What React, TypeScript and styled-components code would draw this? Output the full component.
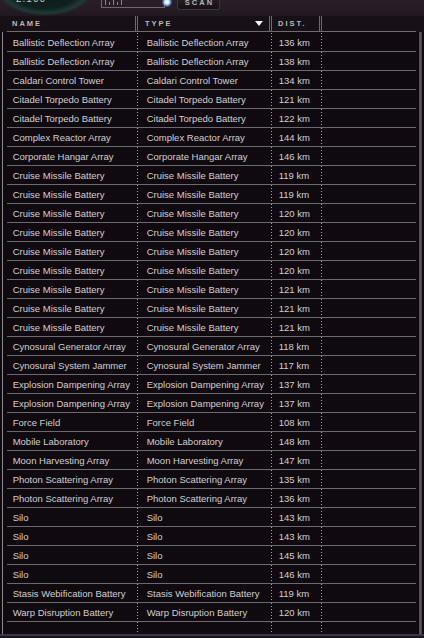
import React from "react";
import styled, { createGlobalStyle } from "styled-components";

const Global = createGlobalStyle`
  html, body { margin: 0; padding: 0; background: #0d080d; overflow: hidden; }
  * { box-sizing: border-box; }
`;

type Item = { name: string; type: string; dist: number };

const rows: Item[] = [
  ["Ballistic Deflection Array", 136],
  ["Ballistic Deflection Array", 138],
  ["Caldari Control Tower", 134],
  ["Citadel Torpedo Battery", 121],
  ["Citadel Torpedo Battery", 122],
  ["Complex Reactor Array", 144],
  ["Corporate Hangar Array", 146],
  ["Cruise Missile Battery", 119],
  ["Cruise Missile Battery", 119],
  ["Cruise Missile Battery", 120],
  ["Cruise Missile Battery", 120],
  ["Cruise Missile Battery", 120],
  ["Cruise Missile Battery", 120],
  ["Cruise Missile Battery", 121],
  ["Cruise Missile Battery", 121],
  ["Cruise Missile Battery", 121],
  ["Cynosural Generator Array", 118],
  ["Cynosural System Jammer", 117],
  ["Explosion Dampening Array", 137],
  ["Explosion Dampening Array", 137],
  ["Force Field", 108],
  ["Mobile Laboratory", 148],
  ["Moon Harvesting Array", 147],
  ["Photon Scattering Array", 135],
  ["Photon Scattering Array", 136],
  ["Silo", 143],
  ["Silo", 143],
  ["Silo", 145],
  ["Silo", 146],
  ["Stasis Webification Battery", 119],
  ["Warp Disruption Battery", 120],
].map(([n, d]) => ({ name: n as string, type: n as string, dist: d as number }));

const Window = styled.div`
  width: 424px;
  height: 638px;
  display: flex;
  flex-direction: column;
  background: #100a10;
  font-family: "Liberation Sans", Arial, sans-serif;
  overflow: hidden;
`;

const TopBar = styled.div`
  height: 16px;
  flex: none;
  display: flex;
  align-items: flex-start;
  overflow: hidden;
  background:
    radial-gradient(ellipse 47px 25px at 45px -9px, #0e1a1c 0%, #10201f 70%, #1f3a39 88%, rgba(31, 58, 57, 0) 100%),
    linear-gradient(to bottom, #2a1f29, #211821);
`;

const Readout = styled.div`
  width: 101px;
  padding-left: 16px;
  margin-top: -7px;
  line-height: 12px;
  font-size: 10px;
  letter-spacing: 1px;
  color: #c9c9c9;
`;

const SliderBox = styled.div`
  width: 64px;
  height: 14px;
  margin-top: -6px;
  border: 1px solid #6d6872;
  border-top: none;
  display: flex;
  align-items: flex-end;
  gap: 3px;
  padding: 0 0 2px 3px;
`;

const Tick = styled.span<{ $h: number }>`
  width: 1px;
  height: ${(p) => p.$h}px;
  background: #8a8590;
`;

const Knob = styled.div`
  width: 10px;
  height: 10px;
  margin: -3px 0 0 -3px;
  border-radius: 50%;
  background: radial-gradient(circle, #ffffff 0%, #cfe6ff 30%, rgba(80, 150, 255, 0.5) 60%, rgba(60, 120, 255, 0) 100%);
`;

const ScanButton = styled.div`
  width: 43px;
  height: 16px;
  margin: -6px 0 0 5px;
  border-radius: 3px;
  border: 1px solid #3d353f;
  background: linear-gradient(to bottom, #2c242c, #151015);
  color: #b5b5b5;
  font-size: 7.5px;
  font-weight: bold;
  letter-spacing: 2px;
  display: flex;
  align-items: center;
  justify-content: center;
  padding-left: 2px;
`;

const HeaderBar = styled.div`
  height: 16px;
  flex: none;
  background: #171117;
  padding-left: 7px;
`;

const HeaderRow = styled.div`
  width: 409px;
  height: 16px;
  display: flex;
  border-bottom: 1px solid #6e6a70;
`;

const HeadCell = styled.div<{ $w: number; $pl: number; $sep?: boolean }>`
  width: ${(p) => p.$w}px;
  flex: none;
  display: flex;
  align-items: center;
  justify-content: space-between;
  padding-left: ${(p) => p.$pl}px;
  padding-right: 6px;
  border-right: ${(p) => (p.$sep ? "3px double #6e6a70" : "none")};
  color: #b9b9b9;
  font-size: 7.5px;
  font-weight: bold;
  letter-spacing: 2px;
`;

const Body = styled.div`
  flex: 1;
  display: flex;
  min-height: 0;
`;

const LeftRail = styled.div`
  width: 1px;
  margin-left: 2px;
  background: #8d8a90;
`;

const List = styled.div`
  width: 409px;
  margin-left: 4px;
  padding-top: 1px;
  display: flex;
  flex-direction: column;
`;

const Row = styled.div`
  height: 19px;
  flex: none;
  display: flex;
  border-bottom: 1px solid #6b6870;
`;

const Filler = styled.div`
  flex: 1;
  display: flex;
`;

const Cell = styled.div<{ $w: number; $pl: number; $dots?: boolean }>`
  width: ${(p) => p.$w}px;
  flex: none;
  padding-left: ${(p) => p.$pl}px;
  display: flex;
  align-items: center;
  white-space: nowrap;
  overflow: hidden;
  color: #d0d0d0;
  font-size: 9.5px;
  background-image: ${(p) =>
    p.$dots ? "linear-gradient(to bottom, #a6a6a6 0 1px, transparent 1px 3px)" : "none"};
  background-size: 1px 3px;
  background-position: right top;
  background-repeat: repeat-y;
`;

const ScrollTrack = styled.div`
  width: 8px;
  margin-left: 3px;
  display: flex;
`;

const ScrollStripe = styled.div`
  width: 3px;
  background: linear-gradient(to right, #4c4752, #5d5862, #3a363e);
`;

const BottomEdge = styled.div`
  height: 4px;
  flex: none;
  border-top: 2px solid #3d3545;
  background: #1a141c;
`;

const cols = { name: 131, type: 134, dist: 50, rest: 94 };

function Columns({ item }: { item?: Item }) {
  return (
    <>
      <Cell $w={cols.name} $pl={6} $dots>{item?.name}</Cell>
      <Cell $w={cols.type} $pl={9} $dots>{item?.type}</Cell>
      <Cell $w={cols.dist} $pl={7} $dots>{item ? `${item.dist} km` : null}</Cell>
      <Cell $w={cols.rest} $pl={0} />
    </>
  );
}

export default function App() {
  return (
    <>
      <Global />
      <Window>
        <TopBar>
          <Readout>2.100</Readout>
          <SliderBox>
            <Tick $h={5} />
            <Tick $h={3} />
            <Tick $h={5} />
            <Tick $h={3} />
            <Tick $h={5} />
          </SliderBox>
          <Knob />
          <ScanButton>SCAN</ScanButton>
        </TopBar>
        <HeaderBar>
          <HeaderRow>
            <HeadCell $w={cols.name} $pl={5} $sep>NAME</HeadCell>
            <HeadCell $w={cols.type} $pl={7} $sep>
              TYPE
              <svg width="8" height="5" viewBox="0 0 8 5">
                <polygon points="0,0 8,0 4,5" fill="#f2f2f2" />
              </svg>
            </HeadCell>
            <HeadCell $w={cols.dist} $pl={6} $sep>DIST.</HeadCell>
            <HeadCell $w={cols.rest} $pl={0} />
          </HeaderRow>
        </HeaderBar>
        <Body>
          <LeftRail />
          <List>
            {rows.map((r, i) => (
              <Row key={i}>
                <Columns item={r} />
              </Row>
            ))}
            <Filler>
              <Columns />
            </Filler>
          </List>
          <ScrollTrack>
            <ScrollStripe />
          </ScrollTrack>
        </Body>
        <BottomEdge />
      </Window>
    </>
  );
}
